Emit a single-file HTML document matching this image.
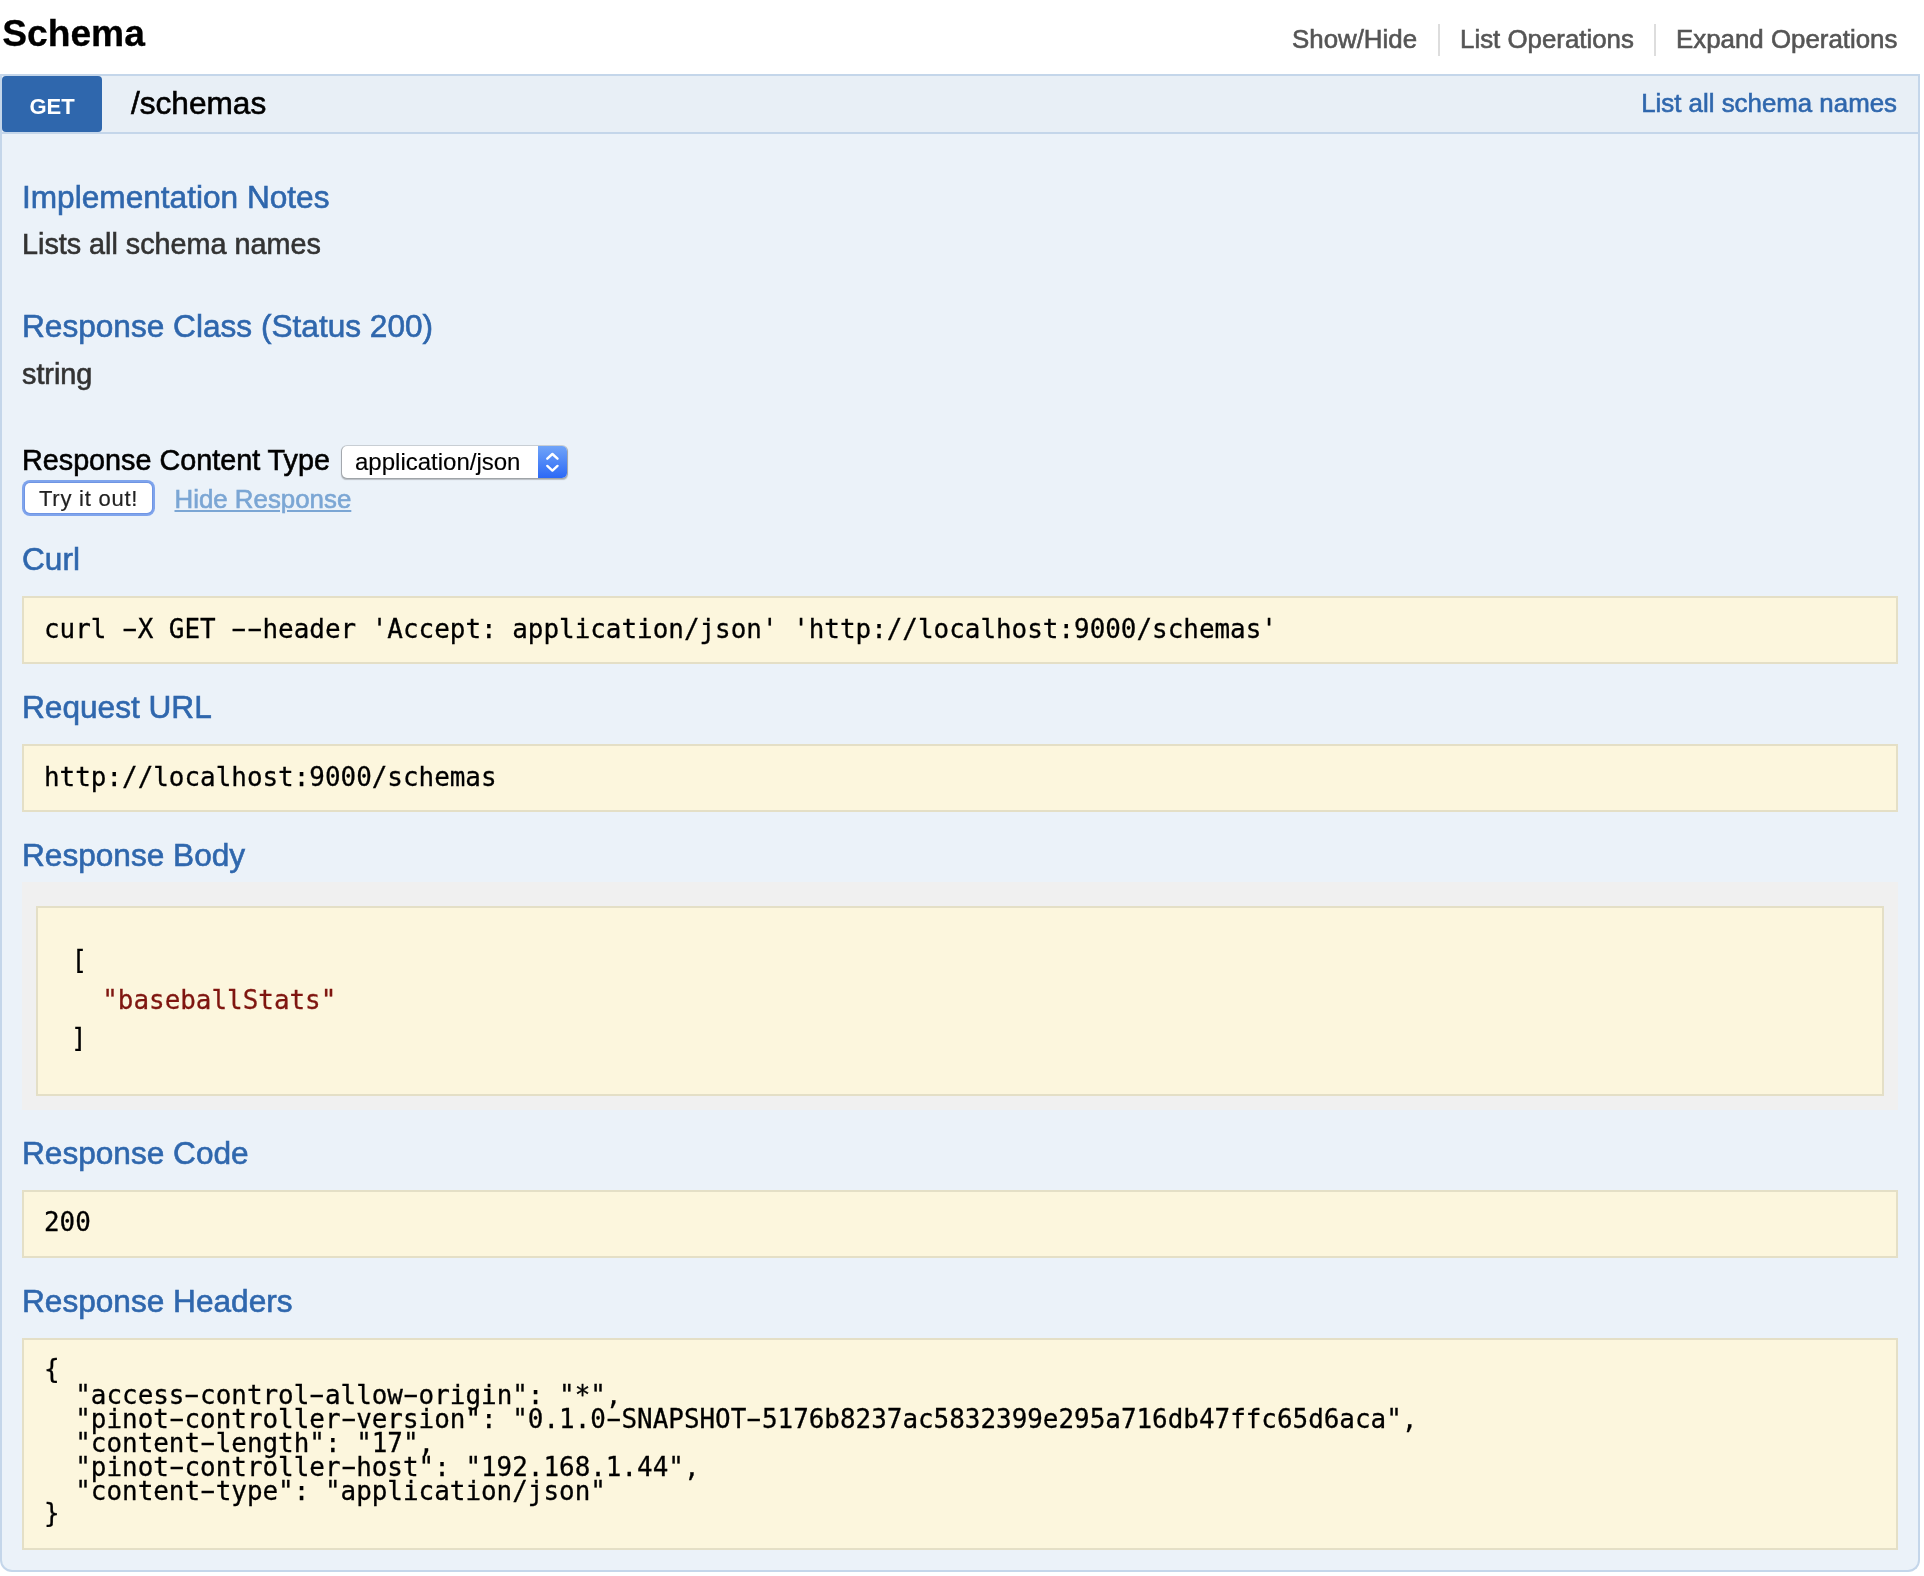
<!DOCTYPE html>
<html lang="en"><head><meta charset="utf-8"><title>Schema</title>
<style>
html,body{margin:0;padding:0;background:#fff;}
body{width:1924px;height:1576px;overflow:hidden;position:relative;font-family:"Liberation Sans", Arial, Helvetica, sans-serif;will-change:transform;transform:translateZ(0);}
div,span,a{box-sizing:border-box;}
h2,h4,p,pre,a,label{margin:0;padding:0;font-weight:normal;font-family:inherit;display:block;}
body>div, .a, .abs{position:absolute;white-space:pre;-webkit-text-stroke:0.6px currentColor;}
.m{-webkit-text-stroke:0.3px currentColor !important;}
.m{font-family:"DejaVu Sans Mono", "Liberation Mono", monospace;}
.h{display:inline-block;transform:translateY(-0.4px) scale(1.8,0.95);}
.hd{left:0;top:74px;width:1920px;height:60px;border:2px solid #c4d6ea;background:#e8eff6;}
.ct{left:0;top:134px;width:1920px;height:1438px;border:2px solid #c4d6ea;border-top:none;background:#ebf2f9;border-radius:0 0 12px 12px;}
.get{left:2px;top:76px;width:100px;height:56px;background:#2f67ad;border-radius:4px;}
.pre{left:22px;width:1876px;background:#fcf6dd;border:2px solid #e4dfc6;}
.sep{width:2px;height:32px;top:24px;background:#ddd;}
</style></head>
<body>
<div class="hd"></div>
<div class="ct"></div>
<div class="get"></div>
<h2 class="a" style="left:2.2px;top:14.91px;font-size:37.2px;line-height:37.2px;color:#000;font-weight:bold;-webkit-text-stroke:0.3px #000;">Schema</h2>
<a class="a" style="left:1292px;top:26.70px;font-size:25.87px;line-height:25.87px;color:#555;">Show/Hide</a>
<div class="sep" style="left:1438px"></div>
<a class="a" style="left:1460px;top:26.70px;font-size:25.87px;line-height:25.87px;color:#555;">List Operations</a>
<div class="sep" style="left:1654px"></div>
<a class="a" style="left:1676px;top:26.70px;font-size:25.87px;line-height:25.87px;color:#555;">Expand Operations</a>
<a class="a" style="left:29px;top:95.78px;font-size:22.0px;line-height:22.0px;color:#fff;-webkit-text-stroke:0;font-weight:bold;width:46px;text-align:center;left:29px;">GET</a>
<a class="a" style="left:131px;top:87.65px;font-size:31.6px;line-height:31.6px;color:#000;">/schemas</a>
<a class="a" style="right:27px;top:90.60px;font-size:25.87px;line-height:25.87px;color:#2f67ad;">List all schema names</a>
<h4 class="a" style="left:22px;top:181.73px;font-size:31.62px;line-height:31.62px;color:#2f67ad;">Implementation Notes</h4>
<p class="a" style="left:22px;top:230.36px;font-size:28.75px;line-height:28.75px;color:#333;">Lists all schema names</p>
<h4 class="a" style="left:22px;top:311.23px;font-size:31.62px;line-height:31.62px;color:#2f67ad;">Response Class (Status 200)</h4>
<p class="a" style="left:22px;top:360.16px;font-size:28.75px;line-height:28.75px;color:#333;">string</p>
<label class="a" style="left:22px;top:445.96px;font-size:28.75px;line-height:28.75px;color:#000;">Response Content Type</label>
<div style="left:342px;top:446px;width:225px;height:32px;border-radius:5px;background:#fff;box-shadow:0 0 0 1px rgba(0,0,0,0.13),0 1px 1px 0.5px rgba(0,0,0,0.22);overflow:hidden;">
<div class="abs" style="left:196px;top:0;width:29px;height:32px;background:linear-gradient(#70a4f8,#2c69f6);"></div>
<svg class="abs" style="left:196px;top:0" width="29" height="32" viewBox="0 0 29 32"><path d="M9.3 12.7 L14.4 8.0 L19.5 12.7 M9.3 19.9 L14.4 24.6 L19.5 19.9" fill="none" stroke="#fff" stroke-width="2.4" stroke-linecap="round" stroke-linejoin="round"/></svg>
</div>
<div class="a" style="left:355px;top:450.08px;font-size:24.0px;line-height:24.0px;color:#000;-webkit-text-stroke:0.15px #000;">application/json</div>
<div style="left:22px;top:480px;width:133px;height:36px;border-radius:8px;background:#7fa4ec;"></div>
<div style="left:25px;top:483px;width:127px;height:30px;border-radius:5px;background:#fff;box-shadow:0 0 0 1px #6f95e4;"></div>
<div class="a" style="left:39px;top:487.88px;font-size:22.0px;line-height:22.0px;color:#222;letter-spacing:0.75px;-webkit-text-stroke:0.2px #222;">Try it out!</div>
<a class="a" style="left:174.5px;top:486.60px;font-size:25.87px;line-height:25.87px;color:#7ba6d4;text-decoration:underline;">Hide Response</a>
<h4 class="a" style="left:22px;top:544.03px;font-size:31.62px;line-height:31.62px;color:#2f67ad;">Curl</h4>
<div class="pre" style="top:596px;height:68px"></div>
<pre class="a m" style="left:44px;top:617.06px;font-size:25.93px;line-height:25.93px;color:#000;">curl <span class="h">-</span>X GET <span class="h">-</span><span class="h">-</span>header 'Accept: application/json' 'http://localhost:9000/schemas'</pre>
<h4 class="a" style="left:22px;top:691.63px;font-size:31.62px;line-height:31.62px;color:#2f67ad;">Request URL</h4>
<div class="pre" style="top:744px;height:68px"></div>
<pre class="a m" style="left:44px;top:764.76px;font-size:25.93px;line-height:25.93px;color:#000;">http://localhost:9000/schemas</pre>
<h4 class="a" style="left:22px;top:839.53px;font-size:31.62px;line-height:31.62px;color:#2f67ad;">Response Body</h4>
<div style="left:22px;top:882px;width:1876px;height:228px;background:#f0f0f0;"></div>
<div class="pre" style="left:36px;top:906px;width:1848px;height:190px"></div>
<pre class="a m" style="left:71.5px;top:947.56px;font-size:25.93px;line-height:25.93px;color:#000;">[</pre>
<pre class="a m" style="left:71px;top:987.76px;font-size:25.93px;line-height:25.93px;color:#000;">  <span style="color:#7f1610">"baseballStats"</span></pre>
<pre class="a m" style="left:71px;top:1025.66px;font-size:25.93px;line-height:25.93px;color:#000;">]</pre>
<h4 class="a" style="left:22px;top:1137.53px;font-size:31.62px;line-height:31.62px;color:#2f67ad;">Response Code</h4>
<div class="pre" style="top:1190px;height:68px"></div>
<pre class="a m" style="left:44px;top:1209.76px;font-size:25.93px;line-height:25.93px;color:#000;">200</pre>
<h4 class="a" style="left:22px;top:1285.93px;font-size:31.62px;line-height:31.62px;color:#2f67ad;">Response Headers</h4>
<div class="pre" style="top:1338px;height:212px"></div>
<pre class="a m" style="left:44px;top:1357.06px;font-size:25.93px;line-height:25.93px;color:#000;">{</pre>
<pre class="a m" style="left:44px;top:1382.56px;font-size:25.93px;line-height:25.93px;color:#000;">  "access<span class="h">-</span>control<span class="h">-</span>allow<span class="h">-</span>origin": "*",</pre>
<pre class="a m" style="left:44px;top:1406.76px;font-size:25.93px;line-height:25.93px;color:#000;">  "pinot<span class="h">-</span>controller<span class="h">-</span>version": "0.1.0<span class="h">-</span>SNAPSHOT<span class="h">-</span>5176b8237ac5832399e295a716db47ffc65d6aca",</pre>
<pre class="a m" style="left:44px;top:1430.76px;font-size:25.93px;line-height:25.93px;color:#000;">  "content<span class="h">-</span>length": "17",</pre>
<pre class="a m" style="left:44px;top:1454.96px;font-size:25.93px;line-height:25.93px;color:#000;">  "pinot<span class="h">-</span>controller<span class="h">-</span>host": "192.168.1.44",</pre>
<pre class="a m" style="left:44px;top:1478.76px;font-size:25.93px;line-height:25.93px;color:#000;">  "content<span class="h">-</span>type": "application/json"</pre>
<pre class="a m" style="left:44px;top:1500.86px;font-size:25.93px;line-height:25.93px;color:#000;">}</pre>
</body></html>
